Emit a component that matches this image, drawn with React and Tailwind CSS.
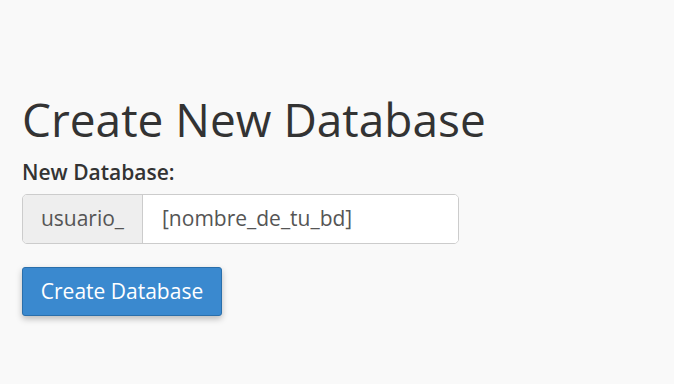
export default function App() {
  return (
    <div className="min-h-screen w-full bg-[#f9f9f9] font-['Open_Sans',sans-serif] text-[#333] pl-[22px] pt-[94px]">
      <h1 className="text-[46px] leading-[50px] font-normal">Create New Database</h1>
      <label className="block mt-[14px] text-[21px] leading-[28px] font-semibold">New Database:</label>
      <div className="mt-[8px] flex w-[437px] h-[50px] rounded-[5px] border border-[#ccc] bg-white overflow-hidden">
        <span className="flex items-center justify-center w-[120px] shrink-0 bg-[#eee] border-r border-[#ccc] text-[21px] text-[#555]">
          usuario_
        </span>
        <input
          defaultValue="[nombre_de_tu_bd]"
          className="flex-1 min-w-0 px-[19px] text-[21px] text-[#555] outline-none bg-white"
        />
      </div>
      <button className="mt-[23px] h-[49px] w-[200px] rounded-[3px] border border-[#2a6fab] bg-[#3a89cf] text-white text-[21px] shadow-[0_3px_6px_rgba(0,0,0,0.25)]">
        Create Database
      </button>
    </div>
  );
}
